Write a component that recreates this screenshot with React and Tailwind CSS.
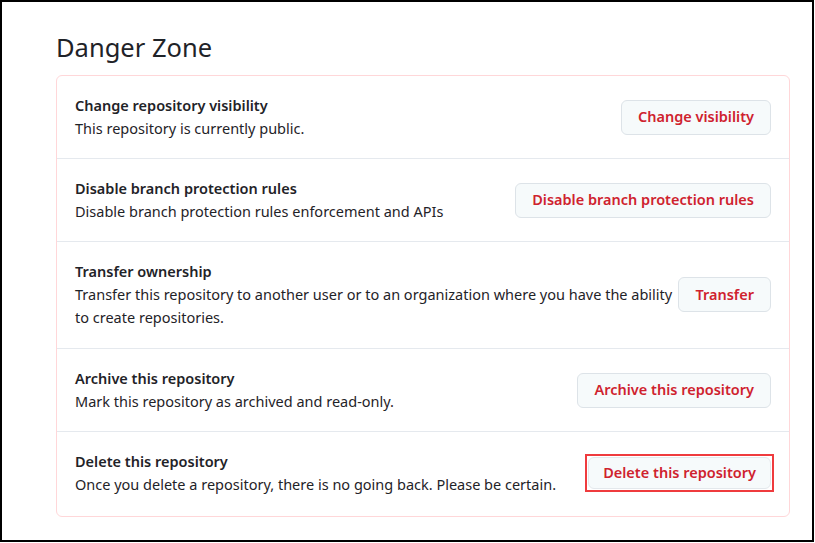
export default function App() {
  const rows = [
    { title: 'Change repository visibility', desc: 'This repository is currently public.', btn: 'Change visibility' },
    { title: 'Disable branch protection rules', desc: 'Disable branch protection rules enforcement and APIs', btn: 'Disable branch protection rules' },
    { title: 'Transfer ownership', desc: 'Transfer this repository to another user or to an organization where you have the ability to create repositories.', btn: 'Transfer', pad: 'pt-[18px] pb-[19px]' },
    { title: 'Archive this repository', desc: 'Mark this repository as archived and read-only.', btn: 'Archive this repository' },
    { title: 'Delete this repository', desc: 'Once you delete a repository, there is no going back. Please be certain.', btn: 'Delete this repository', highlight: true, pad: 'pt-[18px] pb-[20px]' },
  ];

  return (
    <div className="w-[814px] h-[542px] border-2 border-black bg-white pl-[54px] pr-[22px] pt-[29px] text-[#1f2328] font-['Noto_Sans',sans-serif]">
      {/* Heading */}
      <h2 className="text-[25.5px] leading-8 mb-[12px]">Danger Zone</h2>

      {/* Danger box */}
      <div className="border border-[#ffd7d9] rounded-md">
        {rows.map((r, i) => (
          <div
            key={r.title}
            className={`flex items-center gap-[6px] px-[18px] ${r.pad || 'py-[18px]'} ${i > 0 ? 'border-t border-[#e5e9ee]' : ''}`}
          >
            <div className="flex-1 text-[14.5px] leading-[23px]">
              <p className="font-semibold">{r.title}</p>
              <p>{r.desc}</p>
            </div>
            {r.highlight ? (
              <div className="border-2 border-[#ef3b3e] p-[1px] flex-shrink-0 -mr-[3px]">
                <button className="h-[32px] px-[14px] rounded-md border border-[#e3e8ec] bg-[#f6fafb] text-[#cf222e] text-[14.5px] font-semibold">
                  {r.btn}
                </button>
              </div>
            ) : (
              <button className="h-[35px] px-4 rounded-md border border-[#dde3e8] bg-[#f6fafb] text-[#cf222e] text-[14.5px] font-semibold flex-shrink-0">
                {r.btn}
              </button>
            )}
          </div>
        ))}
      </div>
    </div>
  );
}
